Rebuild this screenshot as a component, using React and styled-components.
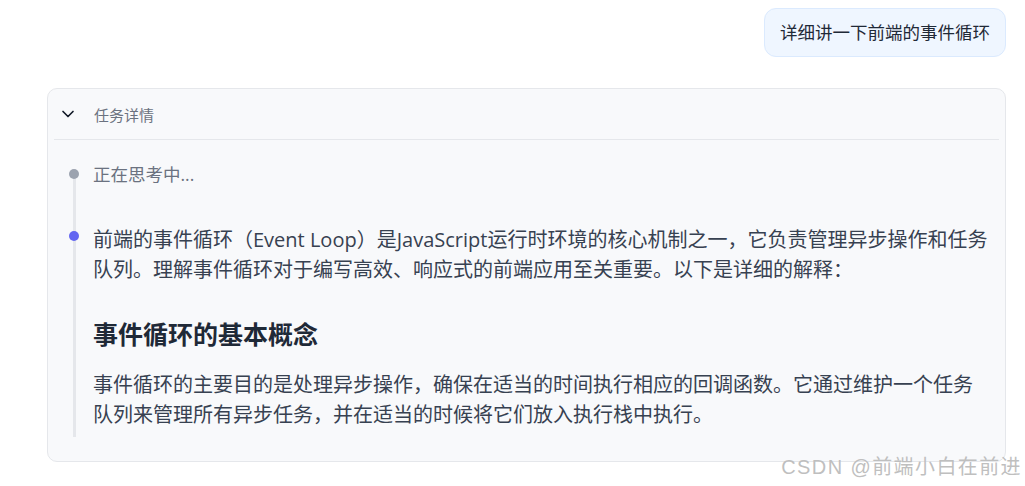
import React from "react";
import styled, { createGlobalStyle } from "styled-components";
import { ChevronDown } from "lucide-react";

const GlobalStyle = createGlobalStyle`
  body {
    margin: 0;
    background: #ffffff;
    font-family: "Open Sans", "Noto Sans CJK SC", sans-serif;
  }
`;

const Page = styled.div`
  position: relative;
  min-height: 486px;
  box-sizing: border-box;
  padding: 8px 19px 0 47px;
`;

const UserRow = styled.div`
  display: flex;
  justify-content: flex-end;
`;

const Bubble = styled.div`
  background: #eff6ff;
  border: 1px solid #dbeafe;
  border-radius: 12px;
  padding: 11px 15px;
  font-size: 17.5px;
  line-height: 25px;
  color: #1f2937;
`;

const Card = styled.div`
  margin-top: 31px;
  border: 1px solid #e5e7eb;
  border-radius: 10px;
  background: #f8f9fb;
  padding: 0 6px;
`;

const Header = styled.div`
  display: flex;
  align-items: center;
  gap: 16px;
  height: 50px;
  padding-left: 4px;
  border-bottom: 1px solid #e5e7eb;
  color: #111827;
`;

const HeaderTitle = styled.span`
  font-size: 15px;
  color: #6b7280;
`;

const Body = styled.div`
  padding: 22px 9px 24px 0;
`;

const Steps = styled.div`
  position: relative;
  padding-bottom: 7px;

  &::before {
    content: "";
    position: absolute;
    left: 19px;
    top: 12px;
    bottom: 0;
    width: 3px;
    background: #e5e7eb;
  }
`;

const Step = styled.div`
  position: relative;
  padding-left: 39px;
  margin-top: ${(p) => p.$gap || 0}px;
`;

const Dot = styled.span`
  position: absolute;
  left: 15px;
  top: ${(p) => p.$top}px;
  width: 10px;
  height: 10px;
  border-radius: 50%;
  background: ${(p) => p.$color};
`;

const Thinking = styled.div`
  font-size: 17.5px;
  line-height: 25px;
  color: #6b7280;
`;

const Para = styled.p`
  margin: 0;
  font-size: 20px;
  line-height: 30px;
  color: #374151;
`;

const Heading = styled.h3`
  margin: 33px 0 20px;
  font-size: 25px;
  line-height: 32px;
  font-weight: 700;
  color: #1f2937;
`;

const Watermark = styled.div`
  position: absolute;
  right: 3px;
  top: 454px;
  font-family: "Liberation Sans", "Noto Sans CJK SC", sans-serif;
  font-size: 20px;
  letter-spacing: 1.4px;
  line-height: 26px;
  color: #bfbfbf;
`;

const App = () => {
  return (
    <Page>
      <GlobalStyle />
      <UserRow>
        <Bubble>详细讲一下前端的事件循环</Bubble>
      </UserRow>
      <Card>
        <Header>
          <ChevronDown size={20} strokeWidth={2} />
          <HeaderTitle>任务详情</HeaderTitle>
        </Header>
        <Body>
          <Steps>
            <Step>
              <Dot $top={7} $color="#9ca3af" />
              <Thinking>正在思考中...</Thinking>
            </Step>
            <Step $gap={38}>
              <Dot $top={6} $color="#6366f1" />
              <Para>
                前端的事件循环（Event Loop）是JavaScript运行时环境的核心机制之一，它负责管理异步操作和任务队列。理解事件循环对于编写高效、响应式的前端应用至关重要。以下是详细的解释：
              </Para>
              <Heading>事件循环的基本概念</Heading>
              <Para>
                事件循环的主要目的是处理异步操作，确保在适当的时间执行相应的回调函数。它通过维护一个任务队列来管理所有异步任务，并在适当的时候将它们放入执行栈中执行。
              </Para>
            </Step>
          </Steps>
        </Body>
      </Card>
      <Watermark>CSDN @前端小白在前进</Watermark>
    </Page>
  );
};

export default App;
